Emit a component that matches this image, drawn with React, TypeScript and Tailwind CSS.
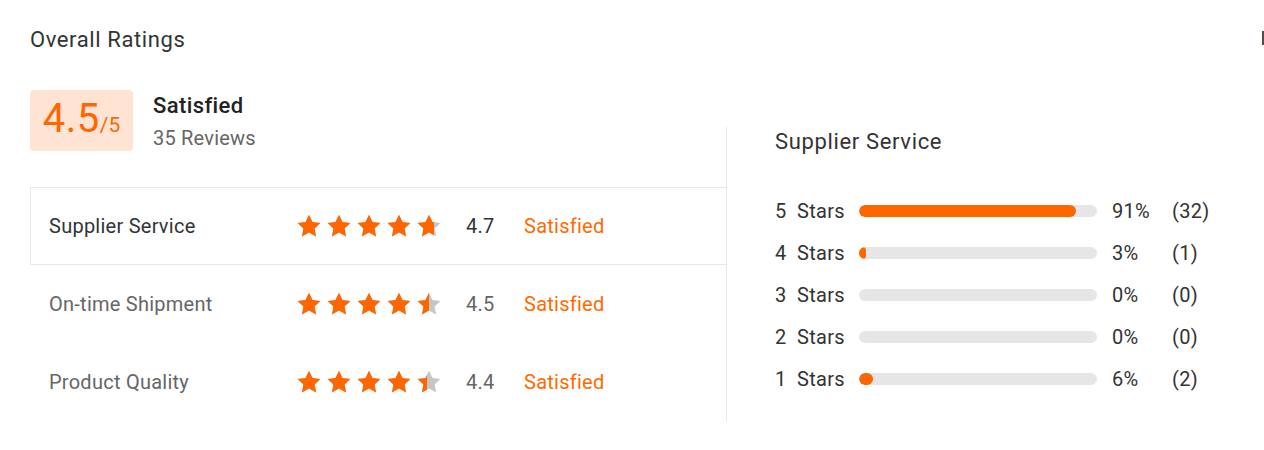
import React from "react";

const STAR_PATH =
  "M12 0.8l3.5 7.3 7.9 1-5.8 5.5 1.5 7.9L12 18.6l-7.1 3.9 1.5-7.9L0.6 9.1l7.9-1z";

function Star({ fill }: { fill: number }) {
  return (
    <div className="relative w-[24px] h-[24px]">
      <svg viewBox="0 0 24 24" className="absolute inset-0 w-[24px] h-[24px]">
        <path d={STAR_PATH} fill="#c6c6c6" />
      </svg>
      <div className="absolute inset-y-0 left-0 overflow-hidden" style={{ width: `${fill * 100}%` }}>
        <svg viewBox="0 0 24 24" className="w-[24px] h-[24px]">
          <path d={STAR_PATH} fill="#ff6600" />
        </svg>
      </div>
    </div>
  );
}

function Stars({ value }: { value: number }) {
  return (
    <div className="flex gap-[6px]">
      {[0, 1, 2, 3, 4].map((i) => (
        <Star key={i} fill={Math.max(0, Math.min(1, value - i))} />
      ))}
    </div>
  );
}

const categories = [
  { name: "Supplier Service", score: 4.7, active: true },
  { name: "On-time Shipment", score: 4.5, active: false },
  { name: "Product Quality", score: 4.4, active: false },
];

const breakdown = [
  { stars: 5, pct: 91, count: 32 },
  { stars: 4, pct: 3, count: 1 },
  { stars: 3, pct: 0, count: 0 },
  { stars: 2, pct: 0, count: 0 },
  { stars: 1, pct: 6, count: 2 },
];

export default function App() {
  return (
    <div
      className="bg-white min-h-[450px] w-[1264px] text-[#333]"
      style={{ fontFamily: "Roboto, 'Liberation Sans', sans-serif" }}
    >
      <div className="flex justify-between items-start pt-[26px] pl-[30px]">
        <h2 className="text-[22px] leading-[28px] tracking-[0.6px] text-[#333]">Overall Ratings</h2>
        <div className="w-[2px] h-[14px] mt-[5px] bg-[#5a4a44]" />
      </div>

      <div className="flex items-start pl-[30px] mt-[36px]">
        {/* left */}
        <div className="w-[696px]">
          <div className="flex items-start gap-[20px]">
            <div className="w-[103px] h-[61px] rounded-[4px] bg-[#ffe4d4] flex items-baseline justify-center pt-[5px] text-[#ff6600]">
              <span className="text-[40px] leading-[48px] tracking-[0.5px]">4.5</span>
              <span className="text-[21px] leading-[20px]">/5</span>
            </div>
            <div className="flex flex-col">
              <span className="text-[22px] leading-[32px] font-medium tracking-[0.4px] text-[#222]">Satisfied</span>
              <span className="text-[20px] leading-[32px] tracking-[0.2px] text-[#666]">35 Reviews</span>
            </div>
          </div>

          <div className="mt-[33px]">
            {categories.map((c) => (
              <div
                key={c.name}
                className={
                  c.active
                    ? "flex items-center h-[78px] border border-r-0 border-[#e8e8e8] pl-[18px] text-[20px] tracking-[0.25px]"
                    : "flex items-center h-[78px] pl-[19px] text-[20px] tracking-[0.25px]"
                }
              >
                <span className={c.active ? "w-[248px] text-[#333]" : "w-[248px] text-[#666]"}>
                  {c.name}
                </span>
                <div className="w-[169px]">
                  <Stars value={c.score} />
                </div>
                <span className={c.active ? "w-[58px] text-[#333]" : "w-[58px] text-[#666]"}>
                  {c.score}
                </span>
                <span className="text-[#ff6a00]">Satisfied</span>
              </div>
            ))}
          </div>
        </div>

        {/* right */}
        <div className="mt-[37px] border-l border-[#e8e8e8] pl-[48px] pb-[21px]">
          <h3 className="text-[22px] leading-[30px] tracking-[0.65px] text-[#333]">Supplier Service</h3>
          <div className="mt-[33px]">
            {breakdown.map((b) => (
              <div key={b.stars} className="flex items-center h-[42px] text-[20px] tracking-[0.3px] text-[#333]">
                <div className="w-[84px] flex">
                  <span className="w-[22px]">{b.stars}</span>
                  <span>Stars</span>
                </div>
                <div className="w-[238px] h-[12px] rounded-full bg-[#e6e6e6] overflow-hidden">
                  <div className="h-full rounded-full bg-[#ff6600]" style={{ width: `${b.pct}%` }} />
                </div>
                <span className="w-[60px] ml-[15px]">{b.pct}%</span>
                <span>({b.count})</span>
              </div>
            ))}
          </div>
        </div>
      </div>
    </div>
  );
}
